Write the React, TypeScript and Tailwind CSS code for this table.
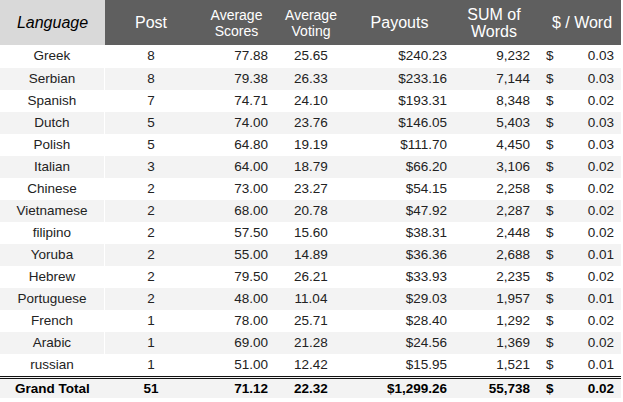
import React from "react";

const rows: [string, string, string, string, string, string, string][] = [
  ["Greek", "8", "77.88", "25.65", "$240.23", "9,232", "0.03"],
  ["Serbian", "8", "79.38", "26.33", "$233.16", "7,144", "0.03"],
  ["Spanish", "7", "74.71", "24.10", "$193.31", "8,348", "0.02"],
  ["Dutch", "5", "74.00", "23.76", "$146.05", "5,403", "0.03"],
  ["Polish", "5", "64.80", "19.19", "$111.70", "4,450", "0.03"],
  ["Italian", "3", "64.00", "18.79", "$66.20", "3,106", "0.02"],
  ["Chinese", "2", "73.00", "23.27", "$54.15", "2,258", "0.02"],
  ["Vietnamese", "2", "68.00", "20.78", "$47.92", "2,287", "0.02"],
  ["filipino", "2", "57.50", "15.60", "$38.31", "2,448", "0.02"],
  ["Yoruba", "2", "55.00", "14.89", "$36.36", "2,688", "0.01"],
  ["Hebrew", "2", "79.50", "26.21", "$33.93", "2,235", "0.02"],
  ["Portuguese", "2", "48.00", "11.04", "$29.03", "1,957", "0.01"],
  ["French", "1", "78.00", "25.71", "$28.40", "1,292", "0.02"],
  ["Arabic", "1", "69.00", "21.28", "$24.56", "1,369", "0.02"],
  ["russian", "1", "51.00", "12.42", "$15.95", "1,521", "0.01"],
];

const cols = "grid grid-cols-[105px_92px_77px_74px_103px_85px_85px]";

export default function App() {
  return (
    <div
      className="w-[623px] h-[402px] bg-white text-[#222] overflow-hidden"
      style={{ fontFamily: '"Liberation Sans", Arial, sans-serif' }}
    >
      <div className="w-[621px]">
        {/* Header */}
        <div className={`${cols} h-[45px] bg-[#5f5f5f] text-white`}>
          <div className="bg-[#d9d9d9] text-black italic text-[16px] flex items-center justify-center">
            Language
          </div>
          <div className="flex items-center justify-center text-[16px]">Post</div>
          <div className="flex items-center justify-center text-center text-[14px] leading-[16px] pl-[2px]">
            Average
            <br />
            Scores
          </div>
          <div className="flex items-center justify-center text-center text-[14px] leading-[16px]">
            Average
            <br />
            Voting
          </div>
          <div className="flex items-center justify-center text-[16px]">Payouts</div>
          <div className="flex items-center justify-center text-center text-[16px] leading-[17px] pl-[1px]">
            SUM of
            <br />
            Words
          </div>
          <div className="flex items-center justify-center text-[16px] pl-[7px]">$ / Word</div>
        </div>

        {/* Body */}
        <div className="text-[13.5px]">
          {rows.map((r, i) => (
            <div
              key={r[0]}
              className={`${cols} ${i === 0 ? "h-[23px]" : "h-[22px]"} ${
                i % 2 === 1 ? "bg-[#f3f3f3]" : "bg-white"
              } items-center`}
            >
              <div className="h-full flex items-center justify-center border-r border-white">{r[0]}</div>
              <div className="text-center">{r[1]}</div>
              <div className="text-right pr-[6px]">{r[2]}</div>
              <div className="text-center">{r[3]}</div>
              <div className="text-right pr-[4px]">{r[4]}</div>
              <div className="text-right pr-[6px]">{r[5]}</div>
              <div className="flex justify-between pl-[10px] pr-[7px]">
                <span>$</span>
                <span>{r[6]}</span>
              </div>
            </div>
          ))}
        </div>

        {/* Grand Total */}
        <div
          className={`${cols} h-[22px] border-t-[3px] border-double border-[#111] bg-[#f3f3f3] items-center font-bold text-[13.5px] text-black`}
        >
          <div className="text-center">Grand Total</div>
          <div className="text-center">51</div>
          <div className="text-right pr-[6px]">71.12</div>
          <div className="text-center">22.32</div>
          <div className="text-right pr-[4px]">$1,299.26</div>
          <div className="text-right pr-[6px]">55,738</div>
          <div className="flex justify-between pl-[10px] pr-[7px]">
            <span>$</span>
            <span>0.02</span>
          </div>
        </div>
      </div>
    </div>
  );
}
